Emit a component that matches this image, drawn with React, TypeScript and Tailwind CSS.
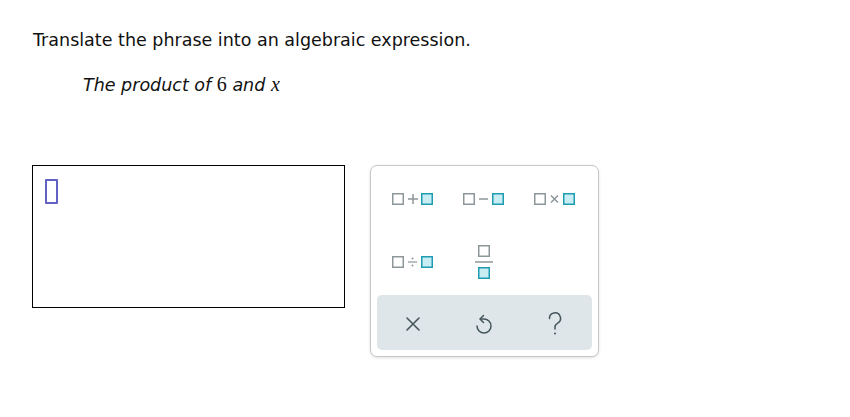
import React from 'react';

const GRAY = '#8d979a';
const TEAL = '#1f9cb2';
const FILL = '#c8edf3';
const DARK = '#44565b';

const Box = ({ x, y, filled }: { x: number; y: number; filled?: boolean }) => (
  <rect
    x={x + 0.75}
    y={y + 0.75}
    width={10.5}
    height={10.5}
    fill={filled ? FILL : 'white'}
    stroke={filled ? TEAL : GRAY}
    strokeWidth={1.5}
  />
);

const BinaryOp = ({ op }: { op: 'plus' | 'minus' | 'times' | 'divide' }) => (
  <svg width="42" height="14" viewBox="0 0 42 14">
    <Box x={0} y={1} />
    {op === 'plus' && (
      <path d="M16 7h10M21 2v10" stroke={GRAY} strokeWidth={1.5} />
    )}
    {op === 'minus' && <path d="M16 7h9" stroke={GRAY} strokeWidth={1.5} />}
    {op === 'times' && (
      <path d="M17 3.5l7 7M24 3.5l-7 7" stroke={GRAY} strokeWidth={1.5} />
    )}
    {op === 'divide' && (
      <>
        <path d="M16 7h9" stroke={GRAY} strokeWidth={1.2} />
        <circle cx="20.5" cy="3.5" r="1" fill={GRAY} />
        <circle cx="20.5" cy="10.5" r="1" fill={GRAY} />
      </>
    )}
    <Box x={29} y={1} filled />
  </svg>
);

const Fraction = () => (
  <svg width="18" height="37" viewBox="0 0 18 37">
    <Box x={3} y={1} />
    <path d="M0 18h18" stroke={GRAY} strokeWidth={1.5} />
    <Box x={3} y={23} filled />
  </svg>
);

const KeyButton = ({ children }: { children: React.ReactNode }) => (
  <button className="flex h-[40px] items-center justify-center">{children}</button>
);

const ClearIcon = () => (
  <svg width="16" height="16" viewBox="0 0 16 16">
    <path d="M2 2l12 12M14 2L2 14" stroke={DARK} strokeWidth={1.6} strokeLinecap="round" />
  </svg>
);

const UndoIcon = () => (
  <svg width="18" height="22" viewBox="0 0 18 22">
    <path
      d="M2 14A7 7 0 1 0 9 7H5.5"
      fill="none"
      stroke={DARK}
      strokeWidth={1.5}
      strokeLinecap="round"
    />
    <path d="M8.5 3.5L5 7l3.5 3.5" fill="none" stroke={DARK} strokeWidth={1.5} strokeLinecap="round" strokeLinejoin="round" />
  </svg>
);

const HelpIcon = () => (
  <svg width="16" height="24" viewBox="0 0 16 24">
    <path
      d="M2.5 6.5a5.5 5.5 0 1 1 8.2 4.6c-1.6 1-2.7 2-2.7 4v2"
      fill="none"
      stroke={DARK}
      strokeWidth={1.5}
      strokeLinecap="round"
    />
    <circle cx="8" cy="21.5" r="1" fill={DARK} />
  </svg>
);

export default function App() {
  return (
    <div className="min-h-screen bg-white pl-[32px] pt-[28px] font-['DejaVu_Sans',Verdana,sans-serif] text-[#111]">
      <p className="pl-[1px] text-[17.5px] leading-[24px]">Translate the phrase into an algebraic expression.</p>
      <p className="mt-[20px] pl-[51px] text-[17.5px] leading-[24px] italic">
        The product of{' '}
        <span className="font-['Liberation_Serif',serif] not-italic text-[20px]">6</span> and{' '}
        <span className="font-['Liberation_Serif',serif] text-[20px]">x</span>
      </p>

      <div className="mt-[68px] flex items-start gap-[25px]">
        <div className="h-[143px] w-[313px] border border-black pl-[12px] pt-[13px]">
          <div className="h-[25px] w-[13px] rounded-[1px] border-2 border-[#6262c4]" />
        </div>

        <div className="w-[229px] rounded-[7px] border border-[#c4c8ca] bg-white px-[6px] pt-[13px] pb-[6px] shadow-[0_1px_3px_rgba(0,0,0,0.12)]">
          <div className="grid grid-cols-3 gap-y-[23px] pr-[2px]">
            <KeyButton><BinaryOp op="plus" /></KeyButton>
            <KeyButton><BinaryOp op="minus" /></KeyButton>
            <KeyButton><BinaryOp op="times" /></KeyButton>
            <KeyButton><BinaryOp op="divide" /></KeyButton>
            <KeyButton><Fraction /></KeyButton>
            <div />
          </div>
          <div className="mt-[13px] grid h-[55px] grid-cols-3 items-center rounded-[5px] bg-[#dfe6e9] pr-[2px]">
            <button className="flex items-center justify-center pt-[3px]"><ClearIcon /></button>
            <button className="flex items-center justify-center"><UndoIcon /></button>
            <button className="flex items-center justify-center pt-[2px]"><HelpIcon /></button>
          </div>
        </div>
      </div>
    </div>
  );
}
